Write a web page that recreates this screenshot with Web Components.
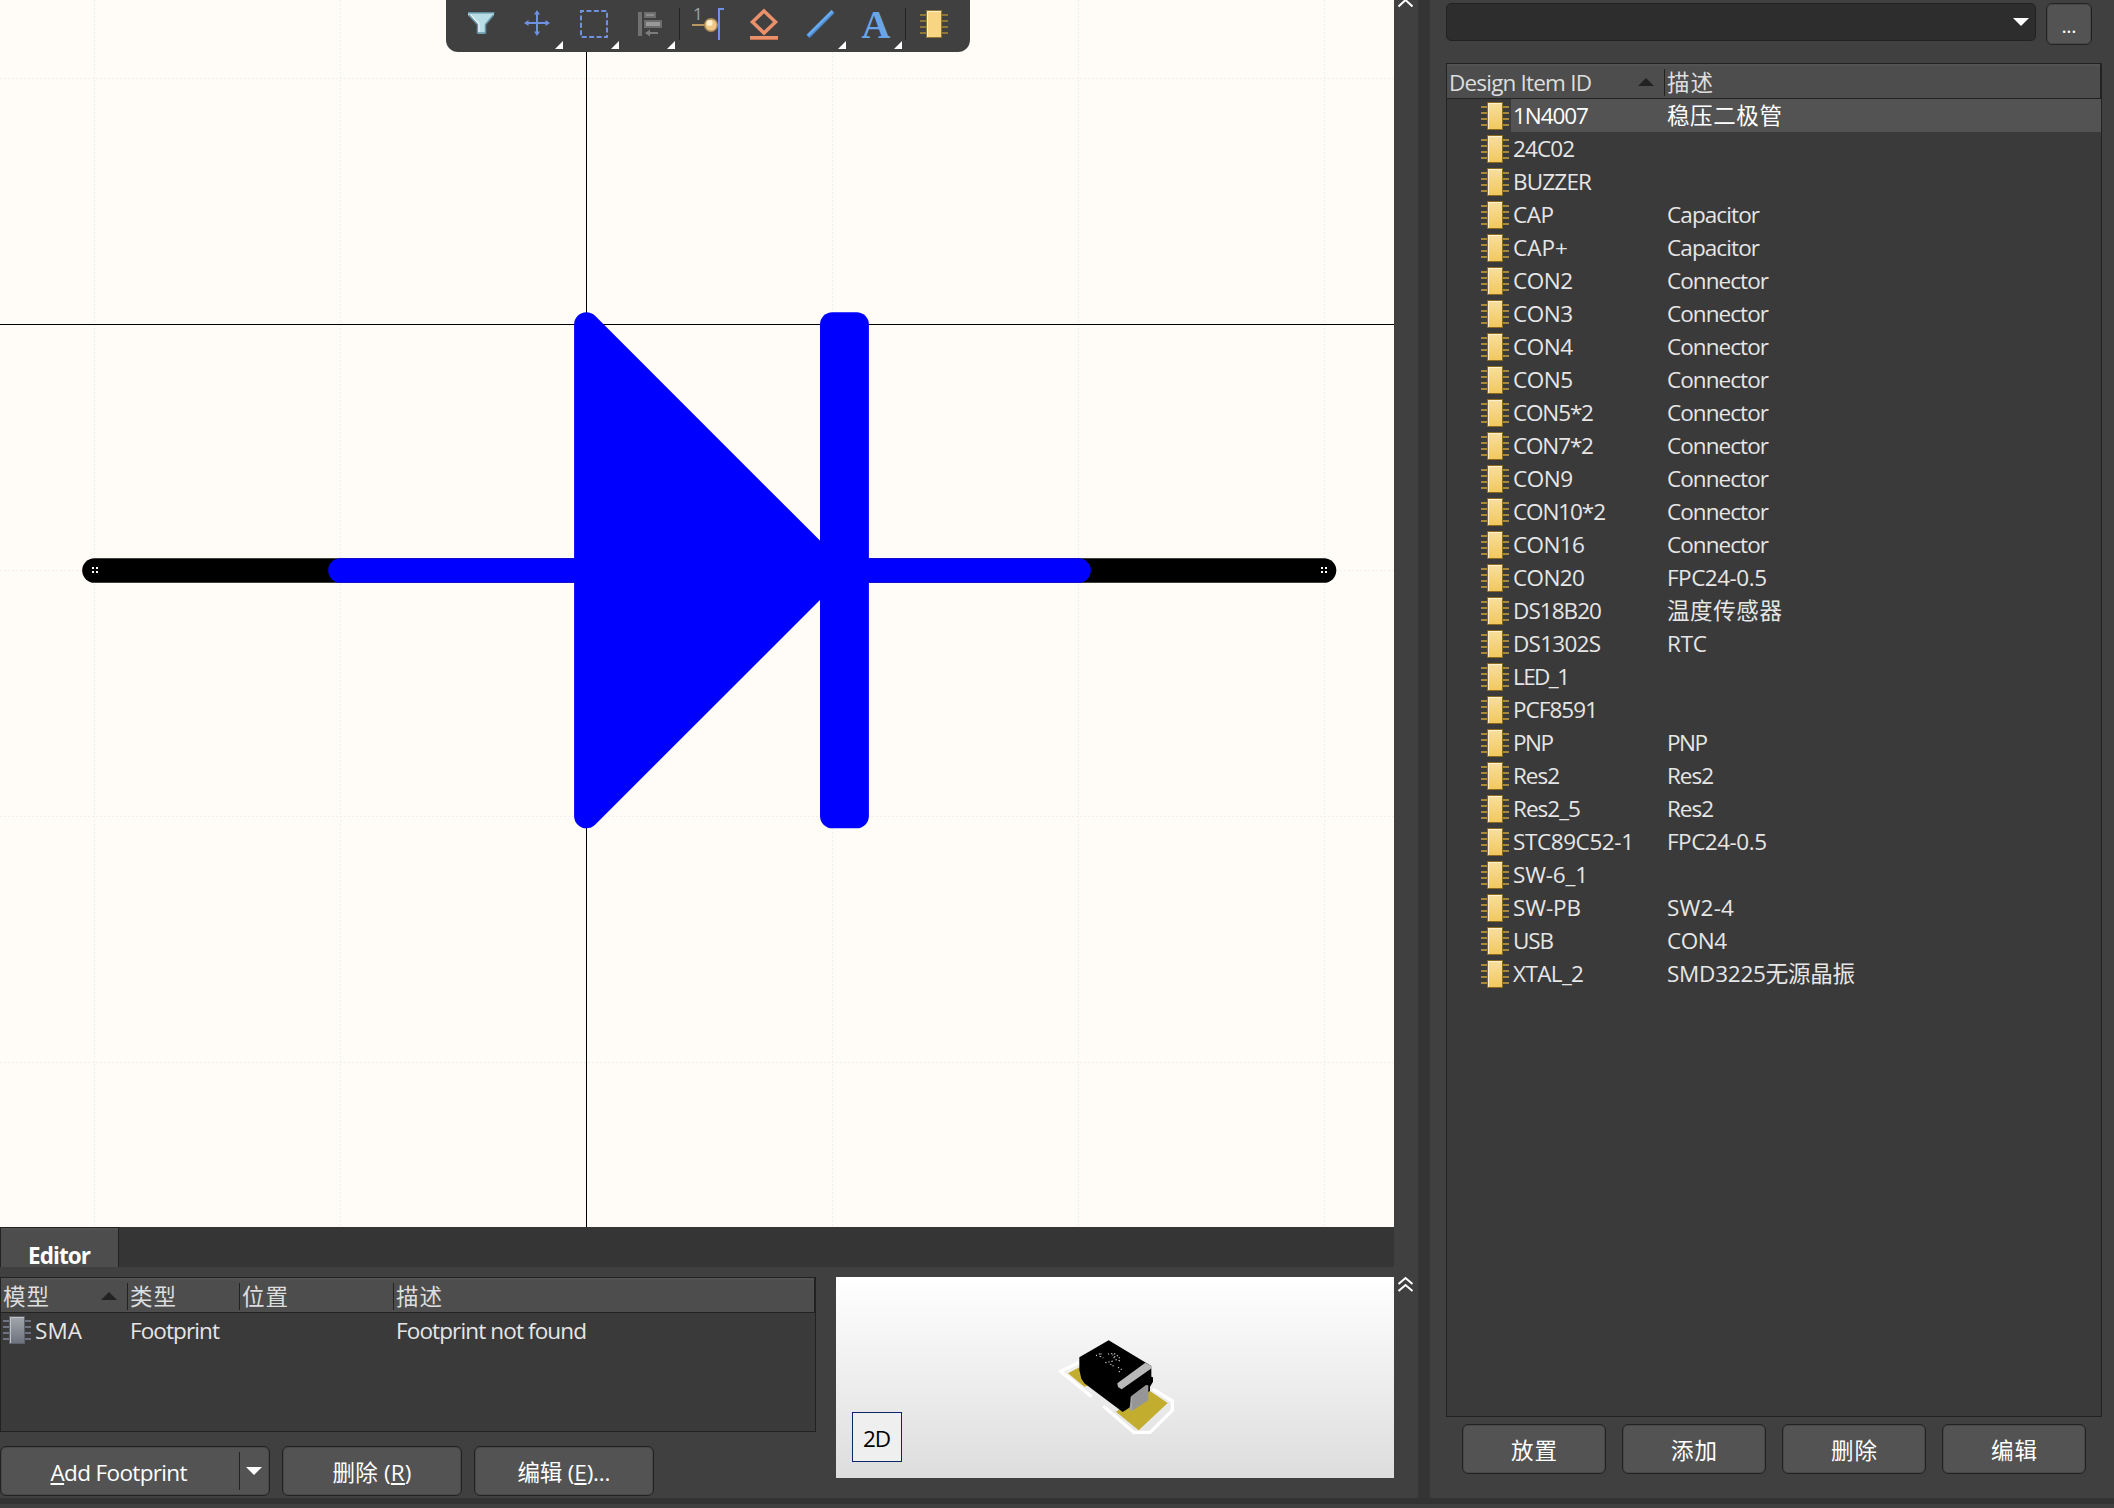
<!DOCTYPE html>
<html lang="zh-CN">
<head>
<meta charset="utf-8">
<title>Library Editor</title>
<style>
html,body{margin:0;height:100%;overflow:hidden;background:#404040}
body{font:22.5px/33px "Open Sans","Noto Sans CJK SC",sans-serif;color:#e6e6e6}
</style>
</head>
<body>
<lib-app></lib-app>
<script>
const define=(name,html,init)=>{
  const t=document.createElement('template');t.innerHTML=html;
  customElements.define(name,class extends HTMLElement{
    connectedCallback(){
      if(this.shadowRoot)return;
      this.attachShadow({mode:'open'}).append(t.content.cloneNode(true));
      if(init)init(this,this.shadowRoot);
    }
  });
};

/* Text tracked to a given width */
define('fit-text',`<style>:host{display:inline-block;white-space:pre}</style><slot></slot>`,el=>{
  const w=+el.getAttribute('w');if(!w)return;
  const natural=el.getBoundingClientRect().width;
  const s=(w-natural)/(el.textContent.length-1);
  el.style.letterSpacing=s+'px';
  el.style.marginRight=-s+'px';
});

define('chip-icon',`<style>:host{display:block;width:28px;height:28px;flex:none}svg{display:block}
:host{--a:#f8dfa0;--b:#f2c85c;--e:#8c6a1e;--l:#a8893a;--h:#fff3cf}
:host([gray]){--a:#a4a7ad;--b:#6c727e;--e:#5d626c;--l:#6d7380;--h:#bfc2c8}
:host([flat]){--a:#f8d583;--b:#f8d583;--e:#8e7636;--l:#8e7636;--h:#fff0c8}</style>
<svg width="28" height="28" viewBox="0 0 28 28"><defs><linearGradient id="g" x2="0" y2="1"><stop style="stop-color:var(--a)"/><stop offset="1" style="stop-color:var(--b)"/></linearGradient></defs>
<path d="M0 5h28M0 11h28M0 17h28M0 23h28" stroke-width="2" style="stroke:var(--l)"/>
<rect x="6.5" y=".5" width="15" height="27" fill="url(#g)" style="stroke:var(--e)"/><path d="M7.500 27V1.500H21" fill="none" style="stroke:var(--h)"/></svg>`);

define('push-button',`<style>:host{display:flex;box-sizing:border-box;height:50px;border:1.500px solid #222;border-radius:6px;background:#535353;box-shadow:inset 0 0 0 1px #474747;color:#fff;align-items:center;justify-content:center;flex:none}
.drop{display:none;width:30px;align-self:stretch;align-items:center;justify-content:center}
.drop:before{content:"";width:1px;height:38px;background:#222;margin-right:auto}
.drop svg{margin-right:7px}
.label{flex:1;text-align:center;padding-top:2px}
:host([menu]) .drop{display:flex}:host([menu]) .label{padding-right:2px}</style>
<div class="label"><slot></slot></div><div class="drop"><svg width="16" height="8"><path d="M0 0h16l-8 8z" fill="#fff"/></svg></div>`);

define('tool-button',`<style>:host{display:block;position:relative;width:56px;height:52px;flex:none}
i{display:none;position:absolute;left:46px;top:41px;width:8px;height:8px;background:#fff;clip-path:polygon(100% 0,100% 100%,0 100%)}
:host([menu]) i{display:block}</style><slot></slot><i></i>`);

define('tool-strip',`<style>:host{display:flex;box-sizing:border-box;width:524px;height:52px;padding-left:7px;background:#404040;border-radius:0 0 12px 12px}
svg{display:block}.sep{width:1px;height:32px;background:#222;margin:8px 0 0 2px}.sep.b{margin-left:1px}.c{padding:10px 0 0 14px}</style>
<tool-button><svg width="56" height="52"><path d="M15 12H41V15L33 24.500V33H31.500V34H25.500V33H24V24.500L15 15Z" fill="#b9dde4"/><path d="M17 15L25.500 24V32" stroke="#f0fbfc" stroke-width="2" fill="none"/><path d="M15 12.800H41.500M16 15L24.500 24.500V33H32.500V24.500L40.500 15" stroke="#6492a4" stroke-width="1.500" fill="none"/></svg></tool-button>
<tool-button menu><svg width="56" height="52"><path d="M28 13V33M18 23H38" stroke="#7090e0" stroke-width="2"/><path d="M28 10l3 4.500h-6zM28 36l3-4.500h-6zM15 23l4.500-3v6zM41 23l-4.500-3v6z" fill="#7090e0"/></svg></tool-button>
<tool-button menu><svg width="56" height="52"><rect x="16" y="11" width="26" height="26" fill="none" stroke="#7090e0" stroke-width="2" stroke-dasharray="5 2.430" stroke-dashoffset="2"/></svg></tool-button>
<tool-button menu><svg width="56" height="52"><path d="M17 12h4v24h-4z" fill="#717171"/><rect x="24" y="13" width="10" height="4" fill="#8c8c8c" stroke="#6d6d6d" stroke-width="2"/><rect x="24" y="21" width="16" height="6" fill="#999" stroke="#6d6d6d" stroke-width="2"/><path d="M37 33H27" stroke="#7c7c7c" stroke-width="2"/><path d="M24 33l5-3.500v7z" fill="#7c7c7c"/></svg></tool-button>
<div class="sep"></div>
<tool-button><svg width="56" height="52"><text x="13" y="20" font-family="Open Sans" font-size="17" fill="#9ba3b5">1</text><path d="M12 25H25" stroke="#b99660" stroke-width="2"/><circle cx="31" cy="25" r="6.300" fill="#ecc987" stroke="#a88a55" stroke-width="1.400"/><circle cx="29.500" cy="23" r="3" fill="#fff0d0"/><path d="M44 9H39V40" fill="none" stroke="#6d93e6" stroke-width="2"/></svg></tool-button>
<tool-button><svg width="56" height="52"><path d="M28 11L39.500 22 28 33 16.500 22Z" fill="none" stroke="#ea916b" stroke-width="3.500"/><path d="M14 36h28v4H14z" fill="#ea916b"/><path d="M14 39.500h28" stroke="#c97250"/></svg></tool-button>
<tool-button menu><svg width="56" height="52"><path d="M16 36.500L41 11.500" stroke="#4a8ad0" stroke-width="4.500"/><path d="M15.800 35.500L40.500 11" stroke="#69a8ec" stroke-width="2.500"/></svg></tool-button>
<tool-button menu><svg width="56" height="52"><text x="28" y="38" text-anchor="middle" font-family="Liberation Serif" font-weight="bold" font-size="40" fill="#69a5e8">A</text></svg></tool-button>
<div class="sep b"></div>
<tool-button><div class="c"><chip-icon flat></chip-icon></div></tool-button>`);

define('schematic-canvas',`<style>:host{display:grid;width:1394px;height:1227px;background:#fffcf8;overflow:hidden}
:host>*{grid-area:1/1}svg{display:block}tool-strip{justify-self:start;margin-left:446px}</style>
<svg width="1394" height="1227"><path d="M94.500 0V1227M340.500 0V1227M832.500 0V1227M1078.500 0V1227M1324.500 0V1227M0 78.500H1394M0 570.500H1394M0 816.500H1394M0 1062.500H1394" stroke="#f1eeec" stroke-dasharray="2 2"/>
<path d="M586.500 0V1227M0 324.500H1394" stroke="#000"/>
<g fill="none" stroke-linecap="round" stroke-linejoin="round" stroke-width="24.600">
<path d="M94.500 570.500H1324" stroke="#000"/><path d="M340.500 570.500H1078.500" stroke="#00f"/>
<path d="M586.400 324.500V816L832.300 570.300Z" fill="#00f" stroke="#00f"/><path d="M832.300 324.500H856.600V816H832.300Z" fill="#00f" stroke="#00f"/></g>
<path d="M92 567h2v2h-2zM96 567h2v2h-2zM92 571h2v2h-2zM96 571h2v2h-2zM1321 567h2v2h-2zM1325 567h2v2h-2zM1321 571h2v2h-2zM1325 571h2v2h-2z" fill="#fff"/></svg>
<tool-strip></tool-strip>`);

/* Table header; columns come from --cols */
define('table-head',`<style>:host{display:grid;grid-template-columns:var(--cols);height:34px;background:linear-gradient(#555,#4d4d4d 3px);border-bottom:1px solid #222;border-right:1px solid #222}</style><slot></slot>`);
define('head-cell',`<style>:host{display:flex;align-items:center;padding-left:2px;color:#ddd;line-height:34px}
.t{padding-top:2px}
i{display:none;width:16px;height:8px;background:#222;clip-path:polygon(50% 0,100% 100%,0 100%);margin:0 10px 0 auto}
:host([sorted]) i{display:block}
b{display:none;width:1px;height:27px;background:#222;margin:0 0 0 auto}:host([rule]) b{display:block}:host([rule][sorted]) b{margin-left:0}</style><span class="t"><slot></slot></span><i></i><b></b>`);

define('library-table',`<style>:host{--cols:218px 1fr;display:block;box-sizing:border-box;width:656px;height:1354px;border:1px solid #222;background:#3a3a3a}
.row{display:grid;grid-template-columns:64px 153px 1fr;height:33px;line-height:34px}
.row chip-icon{margin:3px 0 0 34px}
.row>div{padding-left:2px;height:33px}.row>div+div{padding-left:3px}
.sel>div{background:#535353;color:#fff}</style>
<table-head><head-cell sorted rule><fit-text w="143">Design Item ID</fit-text></head-cell><head-cell><fit-text w="46">描述</fit-text></head-cell></table-head><div id="rows"></div>`,(el,root)=>{
  const C=['Connector',102];
  const data=[['1N4007',76,'稳压二极管',115],['24C02',62],['BUZZER',79],['CAP',41,'Capacitor',93],['CAP+',55,'Capacitor',93],['CON2',60,...C],['CON3',60,...C],['CON4',60,...C],['CON5',60,...C],['CON5*2',81,...C],['CON7*2',81,...C],['CON9',60,...C],['CON10*2',93,...C],['CON16',72,...C],['CON20',72,'FPC24-0.5',100],['DS18B20',89,'温度传感器',115],['DS1302S',88,'RTC',40],['LED_1',57],['PCF8591',85],['PNP',41,'PNP',41],['Res2',47,'Res2',47],['Res2_5',68,'Res2',47],['STC89C52-1',121,'FPC24-0.5',100],['SW-6_1',75],['SW-PB',68,'SW2-4',67],['USB',41,'CON4',60],['XTAL_2',71,'SMD3225无源晶振',188]];
  root.getElementById('rows').innerHTML=data.map(([n,a,d,b],i)=>`<div class="row${i?'':' sel'}"><chip-icon></chip-icon><div><fit-text w="${a}">${n}</fit-text></div><div>${d?`<fit-text w="${b}">${d}</fit-text>`:''}</div></div>`).join('');
});

define('model-table',`<style>:host{--cols:127px 112px 154px 1fr;display:block;box-sizing:border-box;width:816px;height:155px;border:1px solid #222;background:#3a3a3a;margin-top:10px}
.row{display:grid;grid-template-columns:var(--cols);line-height:36px}.m{display:flex;padding-left:2px}.m chip-icon{margin:3px 4px 0 0}.row>div+div{padding-left:2px}</style>
<table-head><head-cell sorted rule><fit-text w="46">模型</fit-text></head-cell><head-cell rule><fit-text w="46">类型</fit-text></head-cell><head-cell rule><fit-text w="46">位置</fit-text></head-cell><head-cell><fit-text w="46">描述</fit-text></head-cell></table-head>
<div class="row"><div class="m"><chip-icon gray></chip-icon><fit-text w="47">SMA</fit-text></div><div><fit-text w="90">Footprint</fit-text></div><div></div><div><fit-text w="191">Footprint not found</fit-text></div></div>`);

define('part-preview',`<style>:host{display:grid;width:558px;height:201px;margin:10px 0 0 20px;background:linear-gradient(#fff,#ddd)}
:host>*{grid-area:1/1}.part{margin:43px 0 0 204px}
.mode{box-sizing:border-box;align-self:end;margin:0 0 16px 16px;width:50px;height:50px;border:1px solid #0c2468;background:#efefef;color:#000;text-align:center;line-height:51px}</style>
<svg class="part" width="150" height="130" viewBox="0 0 450 390"><path d="M118 127L62 154 155 230" fill="none" stroke="#fff" stroke-width="10"/><path d="M84 160L118 142 143 197 133 200Z" fill="#c2ad2e"/>
<path d="M190 258L281 337H330L397 271V243L338 207" fill="none" stroke="#fff" stroke-width="10"/><path d="M228 275L325 210 383 249 296 331Z" fill="#c2ad2e"/>
<path d="M206 61L334 138V170L339 172V185L330 200V212L270 262 248 276 133 190 124 176 118 150V112Z" fill="#000"/>
<path d="M232 190L316 128 336 139V144L245 208 234 201Z" fill="#b9b9b9"/>
<path d="M274 228L318 195 325 196V241L274 274 268 267Z" fill="#969696"/><path d="M274 230V272" stroke="#aaa" stroke-width="4"/>
<g fill="none" stroke="#ccc" stroke-width="3.500" stroke-dasharray="3.500 6"><path d="M168 107L184 99 180 109 190 114M204 102L222 100 238 111 238 122 224 118 218 104 228 114M196 128L216 124 212 135 226 140M234 142L244 148 236 157"/></g></svg>
<div class="mode"><fit-text w="28">2D</fit-text></div>`);

define('editor-panel',`<style>:host{display:block;width:1394px}.tabs{height:40px;background:#353535}
.tab{box-sizing:border-box;width:119px;height:40px;border:1px solid #222;border-bottom:0;background:linear-gradient(#555,#4d4d4d 3px);color:#fff;font-weight:bold;text-align:center;line-height:22px;padding-top:17px}
.main{display:flex}.btns{display:flex;gap:12px;margin-top:14px}
.btns push-button{width:180px}.btns push-button[menu]{width:270px}</style>
<div class="tabs"><div class="tab"><fit-text w="63">Editor</fit-text></div></div>
<div class="main"><div><model-table></model-table><div class="btns"><push-button menu><fit-text w="137"><u>A</u>dd Footprint</fit-text></push-button><push-button><fit-text w="79">删除 (<u>R</u>)</fit-text></push-button><push-button><fit-text w="93">编辑 (<u>E</u>)...</fit-text></push-button></div></div><part-preview></part-preview></div>`);

define('library-panel',`<style>:host{display:block;width:668px;padding:3px 0 0 16px}
.top{display:flex;gap:10px;height:60px}.combo{box-sizing:border-box;width:590px;height:38px;border:1.500px solid #222;border-radius:5px;background:#2d2d2d;display:flex;justify-content:flex-end;padding:14px 6px 0}
.top push-button{width:46px;height:42px;font-size:20px}
.btns{display:flex;gap:16px;margin:7px 0 0 16px}.btns push-button{width:144px}</style>
<div class="top"><div class="combo"><svg width="16" height="8"><path d="M0 0h16l-8 8z" fill="#fff"/></svg></div><push-button><fit-text w="15">...</fit-text></push-button></div>
<library-table></library-table>
<div class="btns"><push-button><fit-text w="46">放置</fit-text></push-button><push-button><fit-text w="46">添加</fit-text></push-button><push-button><fit-text w="46">删除</fit-text></push-button><push-button><fit-text w="46">编辑</fit-text></push-button></div>`);

define('lib-app',`<style>:host{display:block;width:2114px;height:1508px;background:#404040;overflow:hidden}
.cols{display:flex;height:1498px}.gutter{width:24px}.gutter svg{display:block}.split{width:12px;background:#353535}
.foot{height:6px;background:#333}</style>
<div class="cols"><div><schematic-canvas></schematic-canvas><editor-panel></editor-panel></div>
<div class="gutter"><svg width="24" height="1498"><path d="M4.500 6.500L11.500 0 18.500 6.500M4.500 1284L11.500 1278 18.500 1284M4.500 1291L11.500 1285 18.500 1291" fill="none" stroke="#fff" stroke-width="2"/></svg></div>
<div class="split"></div><library-panel></library-panel></div><div class="foot"></div>`);
</script>
</body>
</html>
